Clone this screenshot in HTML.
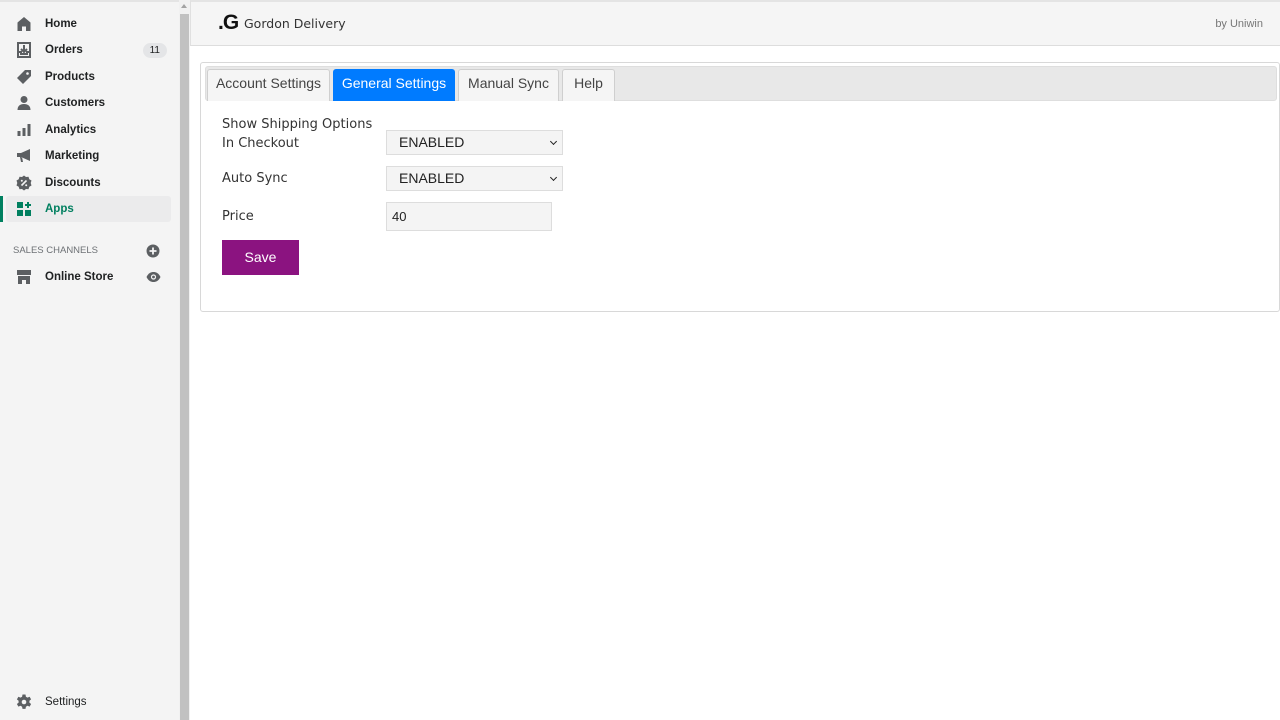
<!DOCTYPE html>
<html><head><meta charset="utf-8"><style>
*{box-sizing:border-box;margin:0;padding:0}
body{width:1280px;height:720px;overflow:hidden;font-family:"Liberation Sans",sans-serif;background:#fff;position:relative}
#side{position:absolute;left:0;top:0;width:179px;height:720px;background:#f4f4f4;border-top:2px solid #e4e4e4}
#scroll{position:absolute;left:179px;top:0;width:11px;height:720px;background:#f1f1f1}
#scroll .thumb{position:absolute;left:1px;top:14px;width:9px;height:706px;background:#c1c1c1}
#scroll .arr{position:absolute;left:2px;top:4px;width:0;height:0;border-left:3.5px solid transparent;border-right:3.5px solid transparent;border-bottom:4px solid #a3a3a3}
.nav{position:absolute;left:6px;width:165px;height:26px;font-size:11.5px;font-weight:bold;color:#202223;display:flex;align-items:center}
.nav svg{position:absolute;left:10px;top:5px}
.nav span{position:absolute;left:39px}
.badge{position:absolute;right:4px;background:#e4e5e7;border-radius:10px;font-size:10px;padding:2px 7px;font-weight:normal;color:#202223}
#main{position:absolute;left:190px;top:0;width:1090px;height:720px}
#hdr{position:absolute;left:0;top:0;width:1090px;height:46px;background:#f5f5f5;border-top:2px solid #e4e4e4;border-bottom:1px solid #ddd;border-left:1px solid #e0e0e0}
#card{position:absolute;left:10px;top:62px;width:1080px;height:250px;border:1px solid #d8d8d8;border-radius:3px}
#tabbar{position:absolute;left:4px;top:3px;width:1072px;height:35px;background:#e8e8e8;border:1px solid #dedede;border-radius:3px}
.tab{position:absolute;top:2px;height:32px;border:1px solid #cfcfcf;border-bottom:none;background:#f5f5f5;border-radius:3px 3px 0 0;font-size:14px;color:#444;text-align:center;line-height:27px}
.lbl{position:absolute;left:21px;color:#333;font-family:"DejaVu Sans","Liberation Sans",sans-serif;font-size:13px}
.sel{position:absolute;left:185px;width:177px;height:25px;background:#f4f4f4;border:1px solid #ddd;font-size:14px;color:#222;padding-left:12px;line-height:23px}
.sel.dd:after{content:"";position:absolute;right:6px;top:8px;width:4px;height:4px;border-right:1.5px solid #222;border-bottom:1.5px solid #222;transform:rotate(45deg)}
</style></head><body>
<div id="side">
<div class="nav" style="top:9px"><svg width="16" height="16" viewBox="0 0 16 16"><path d="M8 1L1.5 6.5V15h4.5v-4.5h4V15h4.5V6.5z" fill="#5c5f62"/></svg><span>Home</span></div>
<div class="nav" style="top:35px"><svg width="16" height="16" viewBox="0 0 16 16"><path d="M2 1h12v14H2z" fill="none" stroke="#5c5f62" stroke-width="2"/><path d="M8 3v7M5 7l3 3 3-3M2 10h3v2h6v-2h3" stroke="#5c5f62" stroke-width="2" fill="none"/></svg><span>Orders</span><div class="badge">11</div></div>
<div class="nav" style="top:62px"><svg width="16" height="16" viewBox="0 0 16 16"><path d="M9 1h6v6L7 15 1 9z" fill="#5c5f62"/><circle cx="11.5" cy="4.5" r="1.3" fill="#f4f4f4"/></svg><span>Products</span></div>
<div class="nav" style="top:88px"><svg width="16" height="16" viewBox="0 0 16 16"><circle cx="8" cy="4.5" r="3.5" fill="#5c5f62"/><path d="M1.5 15c0-4 2.5-6 6.5-6s6.5 2 6.5 6z" fill="#5c5f62"/></svg><span>Customers</span></div>
<div class="nav" style="top:115px"><svg width="16" height="16" viewBox="0 0 16 16"><rect x="1.5" y="9" width="3" height="5" fill="#5c5f62"/><rect x="6.5" y="6" width="3" height="8" fill="#5c5f62"/><rect x="11.5" y="2" width="3" height="12" fill="#5c5f62"/></svg><span>Analytics</span></div>
<div class="nav" style="top:141px"><svg width="16" height="16" viewBox="0 0 16 16"><path d="M1 5h4l9-4v12L5 9H1z M4 9l1 5h2l-1-5z" fill="#5c5f62"/></svg><span>Marketing</span></div>
<div class="nav" style="top:168px"><svg width="16" height="16" viewBox="0 0 16 16"><path d="M8 0.5l2 1.5 2.5-.2.8 2.4 2.2 1.3-.8 2.5.8 2.5-2.2 1.3-.8 2.4-2.5-.2-2 1.5-2-1.5-2.5.2-.8-2.4L.5 10.5l.8-2.5-.8-2.5 2.2-1.3.8-2.4 2.5.2z" fill="#5c5f62"/><path d="M5.5 10.5l5-5" stroke="#f4f4f4" stroke-width="1.6"/><circle cx="5.8" cy="5.8" r="1" fill="#f4f4f4"/><circle cx="10.2" cy="10.2" r="1" fill="#f4f4f4"/></svg><span>Discounts</span></div>
<div style="position:absolute;left:0;top:194px;width:3px;height:26px;background:#008060"></div>
<div class="nav" style="top:194px;background:#ebebec;border-radius:3px;color:#007f5f"><svg width="16" height="16" viewBox="0 0 16 16"><rect x="1" y="1" width="6" height="6" fill="#007f5f"/><rect x="1" y="9" width="6" height="6" fill="#007f5f"/><rect x="9" y="9" width="6" height="6" fill="#007f5f"/><path d="M12 1v6M9 4h6" stroke="#007f5f" stroke-width="2"/></svg><span>Apps</span></div>
<div style="position:absolute;left:13px;top:243px;font-size:9.5px;color:#6d7175">SALES CHANNELS</div>
<svg style="position:absolute;left:146px;top:242px" width="14" height="14" viewBox="0 0 14 14"><circle cx="7" cy="7" r="6.5" fill="#5c5f62"/><path d="M7 3.5v7M3.5 7h7" stroke="#f4f4f4" stroke-width="1.8"/></svg>
<div class="nav" style="top:262px"><svg width="16" height="16" viewBox="0 0 16 16"><path d="M1 1h14v5H1z" fill="#5c5f62"/><path d="M2 7h12v8H10v-4H6v4H2z" fill="#5c5f62"/></svg><span>Online Store</span></div>
<svg style="position:absolute;left:146px;top:269px" width="15" height="12" viewBox="0 0 15 12"><path d="M.5 6C2.5 2 5 1 7.5 1s5 1 7 5c-2 4-4.5 5-7 5s-5-1-7-5z" fill="#5c5f62"/><circle cx="7.5" cy="6" r="2.6" fill="#f4f4f4"/><circle cx="7.5" cy="6" r="1.4" fill="#5c5f62"/></svg>
<div class="nav" style="top:687px"><svg width="16" height="16" viewBox="0 0 16 16"><path d="M6.5 0.5h3l.4 2.2 1.6.9 2.1-.8 1.5 2.6-1.7 1.4v1.8l1.7 1.4-1.5 2.6-2.1-.8-1.6.9-.4 2.2h-3l-.4-2.2-1.6-.9-2.1.8L.9 10l1.7-1.4V6.8L.9 5.4l1.5-2.6 2.1.8 1.6-.9z" fill="#5c5f62"/><circle cx="8" cy="8" r="2.3" fill="#f4f4f4"/></svg><span style="font-weight:normal">Settings</span></div>
</div>
<div id="scroll"><div class="arr"></div><div class="thumb"></div></div>
<div id="main">
<div id="hdr">
<div style="position:absolute;left:27px;top:9px;font-size:21px;font-weight:bold;color:#111;letter-spacing:-1px">.G</div>
<div style="position:absolute;left:53px;top:14px;color:#333;font-family:'DejaVu Sans',sans-serif;font-size:12.5px">Gordon Delivery</div>
<div style="position:absolute;right:17px;top:16px;font-size:11px;color:#777">by Uniwin</div>
</div>
<div id="card">
<div id="tabbar">
<div class="tab" style="left:1px;width:123px">Account Settings</div>
<div class="tab" style="left:127px;width:122px;background:#007bff;border-color:#007bff;color:#fff">General Settings</div>
<div class="tab" style="left:252px;width:101px">Manual Sync</div>
<div class="tab" style="left:356px;width:53px">Help</div>
</div>
<div class="lbl" style="top:52px;line-height:19px">Show Shipping Options<br>In Checkout</div>
<div class="sel dd" style="top:67px">ENABLED</div>
<div class="lbl" style="top:108px">Auto Sync</div>
<div class="sel dd" style="top:103px">ENABLED</div>
<div class="lbl" style="top:146px">Price</div>
<div class="sel" style="top:139px;width:166px;height:29px;padding-left:5px;line-height:27px;font-size:13px">40</div>
<div style="position:absolute;left:21px;top:177px;width:77px;height:35px;background:#8b1380;color:#fff;font-size:14px;text-align:center;line-height:35px">Save</div>
</div>
</div>
</body></html>
